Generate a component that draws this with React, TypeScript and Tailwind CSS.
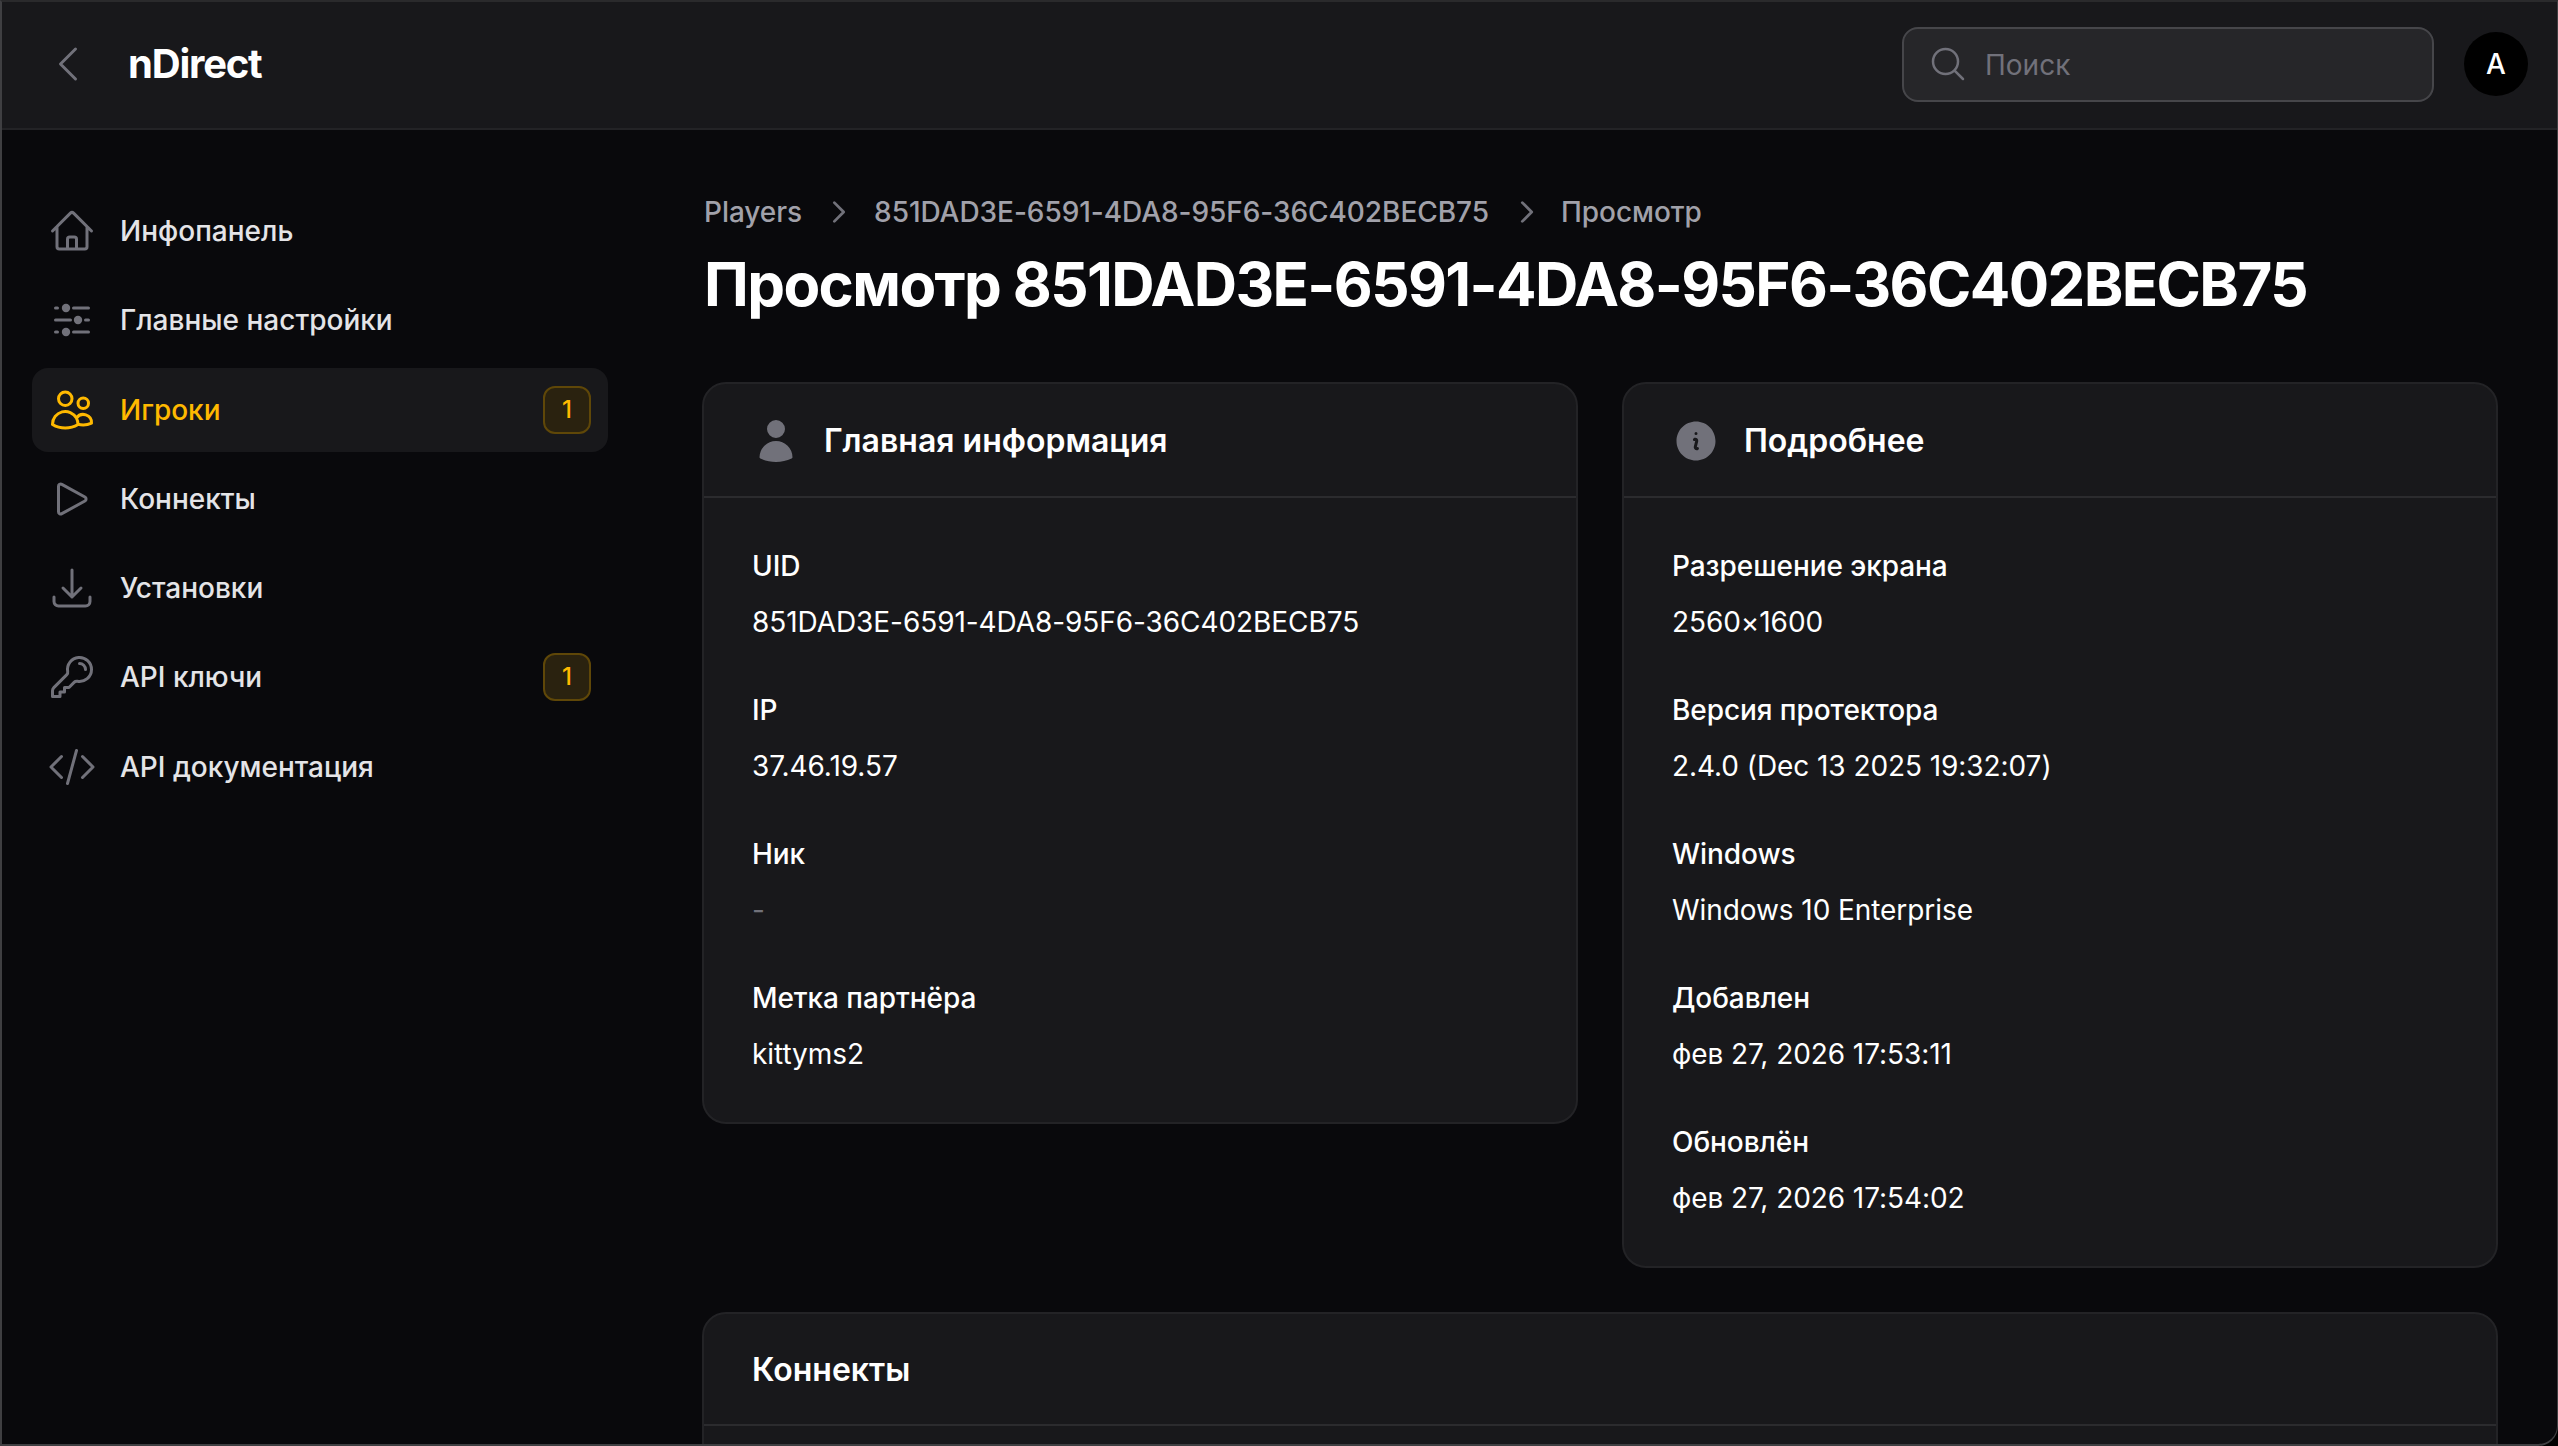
import {
  HiOutlineArrowDownTray,
  HiOutlineChevronLeft,
  HiOutlineChevronRight,
  HiOutlineCodeBracket,
  HiOutlineHome,
  HiOutlineKey,
  HiOutlineMagnifyingGlass,
  HiOutlinePlay,
  HiOutlineUsers,
  HiInformationCircle,
  HiUser,
} from "react-icons/hi2";

function SlidersIcon({ className }: { className?: string }) {
  return (
    <svg viewBox="0 0 48 48" fill="currentColor" stroke="currentColor" strokeWidth={3} strokeLinecap="round" className={className}>
      <path d="M7.5 12H9.5M25.5 12H40.5M7.5 24H22.5M37.5 24H40.5M7.5 36H9.5M25.5 36H40.5" fill="none" />
      <circle cx="18" cy="12" r="4.2" stroke="none" />
      <circle cx="30" cy="24" r="4.2" stroke="none" />
      <circle cx="18" cy="36" r="4.2" stroke="none" />
    </svg>
  );
}

const navItems = [
  { label: "Инфопанель", icon: HiOutlineHome },
  { label: "Главные настройки", icon: SlidersIcon },
  { label: "Игроки", icon: HiOutlineUsers, active: true, badge: "1" },
  { label: "Коннекты", icon: HiOutlinePlay },
  { label: "Установки", icon: HiOutlineArrowDownTray },
  { label: "API ключи", icon: HiOutlineKey, badge: "1" },
  { label: "API документация", icon: HiOutlineCodeBracket },
];

const mainInfo = [
  { label: "UID", value: "851DAD3E-6591-4DA8-95F6-36C402BECB75" },
  { label: "IP", value: "37.46.19.57" },
  { label: "Ник", value: "-", muted: true },
  { label: "Метка партнёра", value: "kittyms2" },
];

const details = [
  { label: "Разрешение экрана", value: "2560×1600" },
  { label: "Версия протектора", value: "2.4.0 (Dec 13 2025 19:32:07)" },
  { label: "Windows", value: "Windows 10 Enterprise" },
  { label: "Добавлен", value: "фев 27, 2026 17:53:11" },
  { label: "Обновлён", value: "фев 27, 2026 17:54:02" },
];

function Field({ label, value, muted }: { label: string; value: string; muted?: boolean }) {
  return (
    <div className="flex flex-col gap-4 tracking-[-0.07px]">
      <div className="text-[28px] leading-[40px] font-medium text-white">{label}</div>
      <div className={`text-[28px] leading-[40px] ${muted ? "text-[#71717a]" : "text-white"}`}>{value}</div>
    </div>
  );
}

function InfoCard({
  title,
  icon,
  fields,
}: {
  title: string;
  icon: React.ReactNode;
  fields: { label: string; value: string; muted?: boolean }[];
}) {
  return (
    <section className="rounded-[24px] border-2 border-[#232326] bg-[#18181b]">
      <div className="flex items-center gap-6 border-b-2 border-[#2b2b2e] px-12 pb-[31px] pt-[33px]">
        {icon}
        <h2 className="text-[32px] leading-[48px] font-semibold text-white">{title}</h2>
      </div>
      <div className="flex flex-col gap-12 p-12">
        {fields.map((f) => (
          <Field key={f.label} {...f} />
        ))}
      </div>
    </section>
  );
}

export default function App() {
  return (
    <div className="h-[1446px] bg-black">
      <div className="h-full overflow-hidden rounded-br-[20px] border-2 border-r border-[#3f3f42] border-t-[#2a2a2c] bg-[#09090c] font-['Inter',sans-serif]">
        <header className="flex h-[128px] items-center border-b-2 border-[#232326] bg-[#18181b] pb-[2px] pl-[42px] pr-[29px]">
          <HiOutlineChevronLeft className="size-12 text-[#71717a]" />
          <div className="ml-[36px] text-[40px] leading-[48px] font-bold tracking-[-1.2px] text-white">nDirect</div>
          <div className="ml-auto flex h-[75px] w-[532px] items-center gap-[17px] rounded-2xl border-2 border-[#46464a] bg-[#262629] pl-6">
            <HiOutlineMagnifyingGlass className="size-10 text-[#71717a]" />
            <span className="pt-[2px] text-[28px] text-[#71717a]">Поиск</span>
          </div>
          <div className="ml-[30px] flex size-16 items-center justify-center rounded-full bg-black text-[28px] font-medium text-white">
            A
          </div>
        </header>

        <div className="flex">
          <aside className="w-[608px] shrink-0 pl-[30px] pr-[2px] pt-[59px]">
            <nav className="flex flex-col gap-[5.25px]">
              {navItems.map((item) => {
                const Icon = item.icon;
                return (
                  <div
                    key={item.label}
                    className={`flex h-[84px] items-center gap-[24px] rounded-[16px] pl-[16px] pr-[17px] ${
                      item.active ? "bg-[#18181b]" : ""
                    }`}
                  >
                    <Icon className={`size-12 shrink-0 ${item.active ? "text-[#ffb900]" : "text-[#71717a]"}`} />
                    <span className={`text-[28px] font-medium ${item.active ? "text-[#ffb900]" : "text-[#e4e4e7]"}`}>
                      {item.label}
                    </span>
                    {item.badge && (
                      <span className="ml-auto flex size-12 items-center justify-center rounded-xl border-2 border-[#5f4708] bg-[#2a220f] text-[24px] font-medium text-[#ffb900]">
                        {item.badge}
                      </span>
                    )}
                  </div>
                );
              })}
            </nav>
          </aside>

          <main className="min-w-0 flex-1 pl-[92px] pr-[59px] pt-[62px]">
            <nav className="ml-[2px] flex items-center text-[28px] leading-[40px] font-medium tracking-[-0.05px] text-[#a1a1aa]">
              <span>Players</span>
              <HiOutlineChevronRight strokeWidth={2.25} className="ml-[22px] mr-[20px] size-[30px] text-[#71717a]" />
              <span>851DAD3E-6591-4DA8-95F6-36C402BECB75</span>
              <HiOutlineChevronRight strokeWidth={2.25} className="ml-[23px] mr-[19px] size-[30px] text-[#71717a]" />
              <span>Просмотр</span>
            </nav>
            <h1 className="ml-[2px] mt-4 text-[60px] leading-[72px] font-bold tracking-[-1.61px] text-white">
              Просмотр 851DAD3E-6591-4DA8-95F6-36C402BECB75
            </h1>

            <div className="mt-[62px] grid grid-cols-2 items-start gap-x-[44px]">
              <InfoCard title="Главная информация" icon={<HiUser className="size-12 text-[#71717a]" />} fields={mainInfo} />
              <InfoCard title="Подробнее" icon={<HiInformationCircle className="size-12 text-[#71717a]" />} fields={details} />
            </div>

            <section className="mt-[44px] rounded-[24px] border-2 border-[#232326] bg-[#18181b]">
              <div className="border-b-2 border-[#2b2b2e] px-12 pb-[30px] pt-8">
                <h2 className="text-[32px] leading-[48px] font-semibold text-white">Коннекты</h2>
              </div>
              <div className="h-[200px]" />
            </section>
          </main>
        </div>
      </div>
    </div>
  );
}
